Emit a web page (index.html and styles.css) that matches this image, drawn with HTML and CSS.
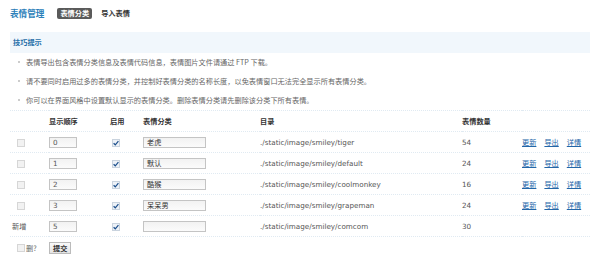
FILE: index.html
```html
<!DOCTYPE html>
<html lang="zh-CN">
<head>
<meta charset="utf-8">
<title>表情管理</title>
<link rel="stylesheet" href="styles.css">
</head>
<body>
<div class="page">
  <div class="head">
    <h1 class="title">表情管理</h1>
    <ul class="tabs">
      <li class="tab active">表情分类</li>
      <li class="tab">导入表情</li>
    </ul>
  </div>
  <div class="tips-title">技巧提示</div>
  <ul class="tips">
    <li>表情导出包含表情分类信息及表情代码信息，表情图片文件请通过 FTP 下载。</li>
    <li>请不要同时启用过多的表情分类，并控制好表情分类的名称长度，以免表情窗口无法完全显示所有表情分类。</li>
    <li>你可以在界面风格中设置默认显示的表情分类。删除表情分类请先删除该分类下所有表情。</li>
  </ul>
  <table class="grid">
    <colgroup>
      <col class="c1"><col class="c2"><col class="c3"><col class="c4"><col class="c5"><col class="c6"><col class="c7">
    </colgroup>
    <thead>
      <tr><th></th><th>显示顺序</th><th>启用</th><th>表情分类</th><th>目录</th><th>表情数量</th><th></th></tr>
    </thead>
    <tbody>
      <tr>
        <td><span class="cb off"></span></td>
        <td><span class="inp order">0</span></td>
        <td><span class="cb on"><svg viewBox="0 0 8 8"><path d="M1.6 4.2 L3.3 5.8 L6.4 2.2"/></svg></span></td>
        <td><span class="inp name">老虎</span></td>
        <td class="path">./static/image/smiley/tiger</td>
        <td class="num">54</td>
        <td class="ops"><a href="#">更新</a><a href="#">导出</a><a href="#">详情</a></td>
      </tr>
      <tr>
        <td><span class="cb off"></span></td>
        <td><span class="inp order">1</span></td>
        <td><span class="cb on"><svg viewBox="0 0 8 8"><path d="M1.6 4.2 L3.3 5.8 L6.4 2.2"/></svg></span></td>
        <td><span class="inp name">默认</span></td>
        <td class="path">./static/image/smiley/default</td>
        <td class="num">24</td>
        <td class="ops"><a href="#">更新</a><a href="#">导出</a><a href="#">详情</a></td>
      </tr>
      <tr>
        <td><span class="cb off"></span></td>
        <td><span class="inp order">2</span></td>
        <td><span class="cb on"><svg viewBox="0 0 8 8"><path d="M1.6 4.2 L3.3 5.8 L6.4 2.2"/></svg></span></td>
        <td><span class="inp name">酷猴</span></td>
        <td class="path">./static/image/smiley/coolmonkey</td>
        <td class="num">16</td>
        <td class="ops"><a href="#">更新</a><a href="#">导出</a><a href="#">详情</a></td>
      </tr>
      <tr>
        <td><span class="cb off"></span></td>
        <td><span class="inp order">3</span></td>
        <td><span class="cb on"><svg viewBox="0 0 8 8"><path d="M1.6 4.2 L3.3 5.8 L6.4 2.2"/></svg></span></td>
        <td><span class="inp name">呆呆男</span></td>
        <td class="path">./static/image/smiley/grapeman</td>
        <td class="num">24</td>
        <td class="ops"><a href="#">更新</a><a href="#">导出</a><a href="#">详情</a></td>
      </tr>
      <tr>
        <td class="new">新增</td>
        <td><span class="inp order">5</span></td>
        <td><span class="cb on"><svg viewBox="0 0 8 8"><path d="M1.6 4.2 L3.3 5.8 L6.4 2.2"/></svg></span></td>
        <td><span class="inp name"></span></td>
        <td class="path">./static/image/smiley/comcom</td>
        <td class="num">30</td>
        <td class="ops"></td>
      </tr>
    </tbody>
    <tfoot>
      <tr>
        <td colspan="7">
          <div class="foot">
            <span class="del"><span class="cb off"></span>删?</span>
            <span class="btn">提交</span>
          </div>
        </td>
      </tr>
    </tfoot>
  </table>
</div>
</body>
</html>
```

FILE: styles.css
```css
html, body {
  margin: 0;
  padding: 0;
  background: #fff;
}
body {
  font-family: "DejaVu Sans", "Noto Sans CJK SC", sans-serif;
  font-size: 7.2px;
  color: #555;
}
.page {
  padding: 0 10px;
}
.head {
  display: flex;
  align-items: center;
  height: 26px;
}
.title {
  margin: 0 13px 0 0;
  font-size: 8.6px;
  font-weight: bold;
  color: #2b80b9;
  font-family: "Noto Sans CJK SC", sans-serif;
}
.tabs {
  display: flex;
  align-items: center;
  list-style: none;
  margin: 0;
  padding: 0;
  gap: 6px;
}
.tab {
  font-family: "Noto Sans CJK SC", sans-serif;
  font-weight: bold;
  color: #333;
  line-height: 11px;
  padding: 0 3px;
  border-radius: 2px;
}
.tab.active {
  background: #5a5a5a;
  color: #fff;
}
.tips-title {
  margin-top: 6px;
  height: 21px;
  line-height: 21px;
  background: #f1f7fc;
  color: #1f6ea8;
  font-weight: bold;
  font-family: "Noto Sans CJK SC", sans-serif;
  padding-left: 3px;
}
.tips {
  list-style: none;
  margin: 0;
  padding: 0;
}
.tips li {
  line-height: 19px;
  padding-left: 16px;
  position: relative;
  font-family: "Noto Sans CJK SC", sans-serif;
  color: #666;
}
.tips li::before {
  content: "";
  position: absolute;
  left: 8px;
  top: 8px;
  width: 2px;
  height: 2px;
  border-radius: 50%;
  background: #bbb;
}
.grid {
  width: 580px;
  margin-top: 0;
  border-collapse: collapse;
  table-layout: fixed;
}
.c1 { width: 39px; }
.c2 { width: 61px; }
.c3 { width: 33px; }
.c4 { width: 117px; }
.c5 { width: 202px; }
.c6 { width: 60px; }
.c7 { width: 68px; }
.grid th, .grid td {
  height: 20px;
  padding: 0;
  text-align: left;
  vertical-align: middle;
  border-top: 1px dotted #e0eaf2;
}
.grid th {
  font-family: "Noto Sans CJK SC", sans-serif;
  font-weight: bold;
  color: #333;
}
.grid td:first-child {
  padding-left: 7px;
}
.grid tfoot td {
  height: 21px;
}
.cb {
  display: inline-block;
  width: 6px;
  height: 6px;
  border: 1px solid #d6d6d6;
  background: #f2f2f2;
  vertical-align: middle;
  position: relative;
}
.cb.on {
  margin-left: 2px;
  background: #eef2f7;
  border-color: #c9d3de;
}
.cb svg {
  position: absolute;
  left: -1px;
  top: -1px;
  width: 8px;
  height: 8px;
}
.cb svg path {
  fill: none;
  stroke: #1d4f8c;
  stroke-width: 1.2;
}
.inp {
  display: inline-block;
  box-sizing: border-box;
  height: 11px;
  line-height: 9px;
  border: 1px solid #c4c4c4;
  background: linear-gradient(#f2f2f2, #fbfbfb);
  padding-left: 3px;
  vertical-align: middle;
  color: #555;
  font-family: "DejaVu Sans", "Noto Sans CJK SC", sans-serif;
}
.inp.order { width: 28px; }
.inp.name {
  width: 63px;
  font-family: "Noto Sans CJK SC", sans-serif;
  color: #333;
}
.path, .num {
  color: #555;
}
.new {
  font-family: "Noto Sans CJK SC", sans-serif;
  color: #555;
}
.grid td.new { padding-left: 2px; }
.ops a {
  color: #2366a8;
  text-decoration: underline;
  font-family: "Noto Sans CJK SC", sans-serif;
  margin-right: 8px;
}
.foot {
  display: flex;
  align-items: center;
}
.del {
  display: inline-flex;
  align-items: center;
  gap: 1px;
  width: 32px;
  font-family: "Noto Sans CJK SC", sans-serif;
  color: #666;
}
.btn {
  display: inline-block;
  box-sizing: border-box;
  height: 12px;
  line-height: 10px;
  padding: 0 3px;
  border: 1px solid #bbb;
  background: linear-gradient(#fafafa, #e4e4e4);
  color: #333;
  font-weight: bold;
  font-family: "Noto Sans CJK SC", sans-serif;
}
```
